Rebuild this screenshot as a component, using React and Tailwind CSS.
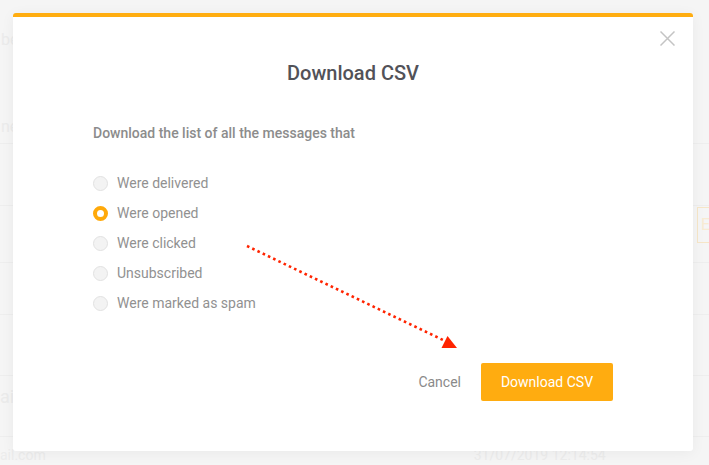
import React, { useState } from 'react';

const options = [
  'Were delivered',
  'Were opened',
  'Were clicked',
  'Unsubscribed',
  'Were marked as spam',
];

function Radio({ checked }) {
  // orange ring when picked, flat grey dot otherwise
  if (checked) {
    return <span className="w-[15px] h-[15px] rounded-full border-[4px] border-[#ffa90a] bg-white shrink-0" />;
  }
  return <span className="w-[15px] h-[15px] rounded-full border border-[#e2e2e2] bg-[#f3f3f3] shrink-0" />;
}

export default function App() {
  const [picked, setPicked] = useState(1);

  return (
    <div className="relative w-[709px] h-[465px] overflow-hidden bg-[#f5f5f5] font-['Roboto','Liberation_Sans',sans-serif]">
      {/* faded page behind the overlay */}
      <div className="flex flex-col text-[#ebebeb] text-[16px] leading-[24px]">
        <div className="h-[66px] pt-[28px] pl-[1px]">be</div>
        <div className="h-[78px] pt-[49px] pl-[1px] border-b border-[#eeeeee]">ne</div>
        <div className="h-[62px] border-b border-[#eeeeee]" />
        <div className="h-[57px] border-b border-[#eeeeee] flex justify-end">
          <div className="w-[12px] h-[36px] mt-[1px] border-y border-l border-[#f6e6c8] text-[#f8ebd3] pl-[3px] leading-[34px]">E</div>
        </div>
        <div className="h-[52px] border-b border-[#eeeeee]" />
        <div className="h-[61px] border-b border-[#eeeeee]" />
        <div className="h-[61px] pt-[9px] border-b border-[#eeeeee] text-[18px]">ai</div>
        <div className="h-[28px] pt-[8px] flex text-[14px] leading-[20px] text-[#ececec]">
          <span>ail.com</span>
          <span className="ml-[428px]">31/07/2019 12:14:54</span>
        </div>
      </div>

      {/* modal */}
      <div className="absolute left-[13px] top-[13px] w-[680px] h-[438px] bg-white rounded-[3px] border-t-4 border-[#ffad10] shadow-[0_2px_14px_rgba(0,0,0,0.05)] flex flex-col">
        <button className="absolute top-[14px] right-[18px] w-[15px] h-[15px] text-[#c4c4c4]">
          <svg viewBox="0 0 15 15" className="w-[15px] h-[15px]" fill="none" stroke="currentColor" strokeWidth="1.5">
            <path d="M0.5 0.5 L14.5 14.5 M14.5 0.5 L0.5 14.5" />
          </svg>
        </button>

        <h2 className="pt-[44px] text-center text-[20px] leading-[24px] font-medium text-[#525258]">Download CSV</h2>

        <div className="px-[80px]">
          <p className="mt-[40px] text-[14px] leading-[16px] font-medium text-[#8c8c8c]">Download the list of all the messages that</p>
          <div className="mt-[27px] flex flex-col">
            {options.map((label, i) => (
              <label key={label} className="h-[30px] flex items-center gap-[9px] cursor-pointer" onClick={() => setPicked(i)}>
                <Radio checked={picked === i} />
                <span className="text-[14px] text-[#919191]">{label}</span>
              </label>
            ))}
          </div>
          <div className="mt-[45px] flex justify-end items-center gap-[20px]">
            <button className="text-[14px] text-[#8a8a8a]">Cancel</button>
            <button className="w-[132px] h-[38px] rounded-[2px] bg-[#ffac10] text-white text-[14px]">Download CSV</button>
          </div>
        </div>
      </div>

      {/* annotation arrow */}
      <svg className="absolute left-0 top-0 pointer-events-none" width="709" height="465">
        <line x1="247" y1="246" x2="443" y2="340" stroke="#ff2400" strokeWidth="2.6" strokeDasharray="2.6 3.2" />
        <polygon points="457,348 441.5,348 447.5,336" fill="#ff2400" />
      </svg>
    </div>
  );
}
